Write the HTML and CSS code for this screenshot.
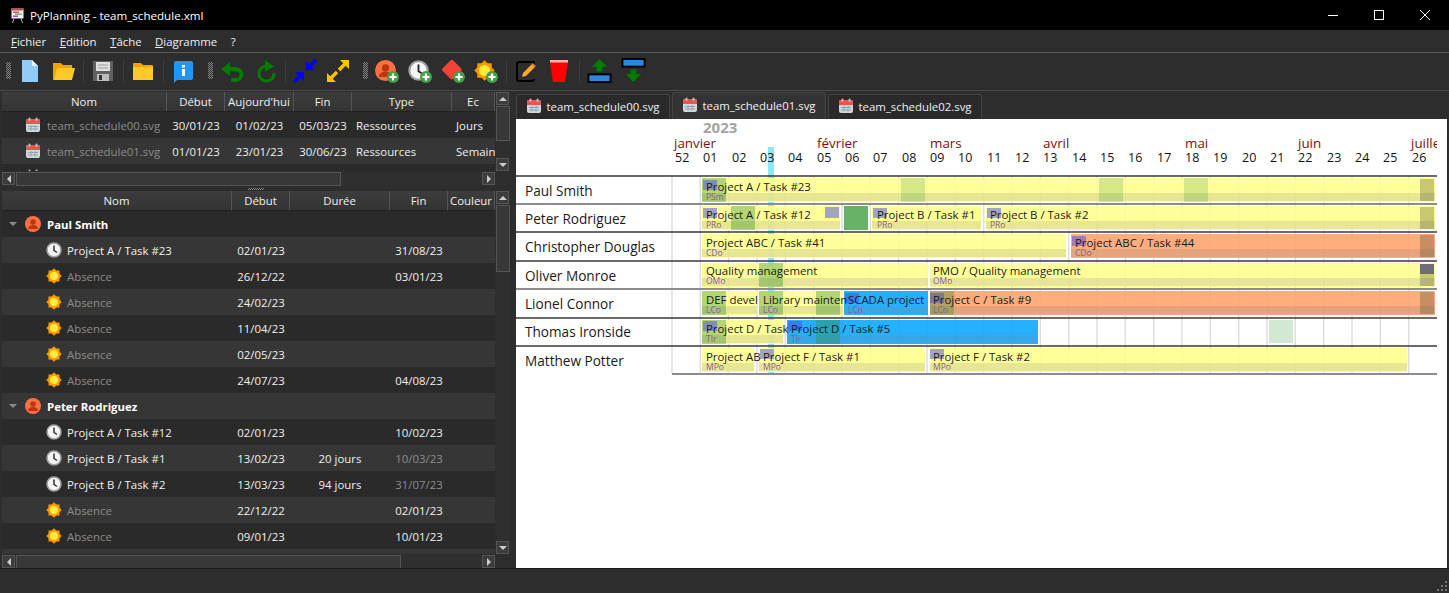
FILE: index.html
```html
<!DOCTYPE html>
<html lang="fr">
<head>
  <meta charset="UTF-8" />
  <title>PyPlanning - team_schedule.xml</title>
  <meta name="viewport" content="width=device-width, initial-scale=1.0" />
  <link rel="stylesheet" href="styles.css">
</head>
<body>

<!-- shared icons -->
<svg class="defs" width="0" height="0">
  <symbol id="i-cal" viewBox="0 0 16 16">
    <rect x="1" y="2" width="14" height="13" rx="2" fill="#cfd8dc"/>
    <path d="M1 7V4a2 2 0 0 1 2-2h10a2 2 0 0 1 2 2v3z" fill="#ef5350"/>
    <rect x="3.5" y="0.5" width="2" height="3.5" rx="1" fill="#b0bec5"/>
    <rect x="10.5" y="0.5" width="2" height="3.5" rx="1" fill="#b0bec5"/>
    <path d="M3 9.5h10M3 12h10M6 8v5.5M10 8v5.5" stroke="#90a4ae" stroke-width="1"/>
  </symbol>
  <symbol id="i-clock" viewBox="0 0 16 16">
    <circle cx="8" cy="8" r="7" fill="#f5f5f5" stroke="#9e9e9e" stroke-width="1.6"/>
    <path d="M8 3.5V8.5L11 10.5" fill="none" stroke="#222" stroke-width="1.4"/>
  </symbol>
  <symbol id="i-sun" viewBox="0 0 16 16">
    <rect x="2.5" y="2.5" width="11" height="11" fill="#ff9800"/>
    <rect x="2.5" y="2.5" width="11" height="11" fill="#ff9800" transform="rotate(45 8 8)"/>
    <circle cx="8" cy="8" r="4.2" fill="#ffeb3b"/>
  </symbol>
  <symbol id="i-person" viewBox="0 0 16 16">
    <circle cx="8" cy="8" r="8" fill="#ff7043"/>
    <circle cx="8" cy="6" r="2.8" fill="#bf360c"/>
    <path d="M3 13c0-3 2.500-4 5-4s5 1 5 4z" fill="#bf360c"/>
  </symbol>
  <symbol id="i-plus" viewBox="0 0 12 12">
    <circle cx="6" cy="6" r="6" fill="#43a047"/>
    <path d="M6 2.500v7M2.500 6h7" stroke="#fff" stroke-width="2.200"/>
  </symbol>
</svg>

<header class="titlebar">
  <svg class="app-icon" viewBox="0 0 13 15" width="13" height="15">
    <rect x="0.500" y="0.500" width="12" height="10" fill="#f5f5f5"/>
    <rect x="0.500" y="0.500" width="12" height="2" fill="#e53935"/>
    <rect x="2" y="3.500" width="6" height="1.500" fill="#ec407a"/>
    <rect x="4" y="5.500" width="7" height="1.500" fill="#66bb6a"/>
    <rect x="2" y="7.500" width="5" height="1.500" fill="#ab47bc"/>
    <path d="M3 10.500l-1.500 4.500M10 10.500l1.500 4.500" stroke="#bbb" stroke-width="1"/>
  </svg>
  <span class="app-title">PyPlanning - team_schedule.xml</span>
  <div class="winbtns">
    <svg width="10" height="10" viewBox="0 0 10 10"><path d="M0 5.500h10" stroke="#fff"/></svg>
    <svg width="10" height="10" viewBox="0 0 10 10"><rect x="0.500" y="0.500" width="9" height="9" fill="none" stroke="#fff"/></svg>
    <svg width="10" height="10" viewBox="0 0 10 10"><path d="M0 0l10 10M10 0L0 10" stroke="#fff"/></svg>
  </div>
</header>

<nav class="menubar">
  <span><u>F</u>ichier</span>
  <span><u>E</u>dition</span>
  <span><u>T</u>âche</span>
  <span><u>D</u>iagramme</span>
  <span>?</span>
</nav>

<div class="toolbar">
  <i class="grip"></i>
  <svg class="tool" viewBox="0 0 24 24"><path d="M4 1h10l6 6v16H4z" fill="#90caf9"/><path d="M14 1l6 6h-6z" fill="#e3f2fd"/></svg>
  <svg class="tool" viewBox="0 0 24 24"><path d="M2 4h8l2 2h9v15H2z" fill="#ffa000"/><path d="M6 9h18l-3 12H3z" fill="#ffca28"/></svg>
  <i class="sep"></i>
  <svg class="tool" viewBox="0 0 24 24"><path d="M2 2h20v20H2z" fill="#616161"/><rect x="5" y="3" width="14" height="9" fill="#e0e0e0"/><path d="M7 6h10M7 9h10" stroke="#9e9e9e"/><rect x="6" y="15" width="12" height="7" fill="#bdbdbd"/><rect x="8" y="16" width="3" height="5" fill="#333"/></svg>
  <i class="sep"></i>
  <svg class="tool" viewBox="0 0 24 24"><path d="M2 5a1 1 0 0 1 1-1h7l2 2h9a1 1 0 0 1 1 1v14H2z" fill="#ffa000"/><path d="M2 8h20v12a1 1 0 0 1-1 1H3a1 1 0 0 1-1-1z" fill="#ffca28"/></svg>
  <i class="sep"></i>
  <svg class="tool" viewBox="0 0 24 24"><path d="M5 2h15a2 2 0 0 1 2 2v15a2 2 0 0 1-2 2H6l-3 3V4a2 2 0 0 1 2-2z" fill="#2196f3"/><rect x="11" y="10" width="3" height="7" fill="#fff"/><rect x="11" y="6" width="3" height="2.500" fill="#fff"/></svg>
  <i class="grip"></i>
  <svg class="tool" viewBox="0 0 24 24"><path d="M8 10h8a5.500 5.500 0 0 1 0 11h-5" fill="none" stroke="#007d00" stroke-width="3.800"/><path d="M1 10l9-7v14z" fill="#007d00"/></svg>
  <svg class="tool" viewBox="0 0 24 24"><path d="M16 7.500a7.500 7.500 0 1 0 5 6.500" fill="none" stroke="#007d00" stroke-width="3"/><path d="M12 1l9 6.500-9 5z" fill="#007d00"/></svg>
  <i class="sep"></i>
  <svg class="tool" viewBox="0 0 24 24"><path d="M13 11V2l9 9zM11 13v9l-9-9z" fill="#0000ff"/><path d="M23 1l-6 6M1 23l6-6" stroke="#0000ff" stroke-width="3.400"/></svg>
  <svg class="tool" viewBox="0 0 24 24"><path d="M23 1v9l-9-9zM1 23v-9l9 9z" fill="#ffc107"/><path d="M19 5l-6 6M5 19l6-6" stroke="#ffc107" stroke-width="3.400"/></svg>
  <i class="grip"></i>
  <svg class="tool" viewBox="0 0 24 24"><use href="#i-person" x="0" y="1" width="21" height="21"/><use href="#i-plus" x="12" y="12" width="12" height="12"/></svg>
  <svg class="tool" viewBox="0 0 24 24"><use href="#i-clock" x="0" y="1" width="21" height="21"/><use href="#i-plus" x="12" y="12" width="12" height="12"/></svg>
  <svg class="tool" viewBox="0 0 24 24"><rect x="3" y="3" width="15" height="15" rx="2" fill="#f44336" transform="rotate(45 10.500 11)"/><use href="#i-plus" x="12" y="12" width="12" height="12"/></svg>
  <svg class="tool" viewBox="0 0 24 24"><use href="#i-sun" x="0" y="1" width="21" height="21"/><use href="#i-plus" x="12" y="12" width="12" height="12"/></svg>
  <i class="sep"></i>
  <svg class="tool" viewBox="0 0 24 24"><path d="M20 8V5a2 2 0 0 0-2-2H5a2 2 0 0 0-2 2v15a2 2 0 0 0 2 2h13a2 2 0 0 0 2-2" fill="none" stroke="#000" stroke-width="2"/><path d="M8 18l1-4 9-9 3 3-9 9z" fill="#ffa726"/><path d="M18 5l1-1 3 3-1 1z" fill="#e57373"/></svg>
  <svg class="tool" viewBox="0 0 24 24"><path d="M3 3h18l-3 20H6z" fill="#ff0000"/><rect x="3" y="1" width="18" height="2.500" fill="#ffb3b3"/></svg>
  <i class="sep"></i>
  <svg class="tool wide" viewBox="0 0 26 26"><path d="M13 1l8 8h-5v5h-6V9H5z" fill="#007d00"/><rect x="1.500" y="17" width="23" height="8" fill="#2e86de" stroke="#000" stroke-width="2"/></svg>
  <svg class="tool wide" viewBox="0 0 26 26"><rect x="1.500" y="1" width="23" height="8" fill="#2e86de" stroke="#000" stroke-width="2"/><path d="M13 25l-8-8h5v-5h6v5h5z" fill="#007d00"/></svg>
</div>

<main class="workspace">
  <section class="leftpane">

    <div class="block block-files">
      <div class="table">
        <div class="thead files-cols">
          <span>Nom</span><span>Début</span><span>Aujourd'hui</span><span>Fin</span><span>Type</span><span>Ec</span>
        </div>
        <div class="tbody">
          <div class="row files-cols">
            <span class="cell-name muted"><svg class="ico"><use href="#i-cal"/></svg>team_schedule00.svg</span><span>30/01/23</span><span>01/02/23</span><span>05/03/23</span><span class="left">Ressources</span><span class="left">Jours</span>
          </div>
          <div class="row files-cols">
            <span class="cell-name muted"><svg class="ico"><use href="#i-cal"/></svg>team_schedule01.svg</span><span>01/01/23</span><span>23/01/23</span><span>30/06/23</span><span class="left">Ressources</span><span class="left">Semaine</span>
          </div>
          <div class="row files-cols">
            <span class="cell-name muted"><svg class="ico"><use href="#i-cal"/></svg>team_schedule02.svg</span>
          </div>
        </div>
      </div>
      <div class="vbar">
        <b class="sbtn"><i class="tri up"></i></b><b class="thumb thumb-v1"></b><b class="track"></b><b class="sbtn"><i class="tri down"></i></b>
      </div>
      <div class="hbar">
        <b class="sbtn"><i class="tri lf"></i></b><b class="thumb thumb-h1"></b><b class="track"></b><b class="sbtn"><i class="tri rt"></i></b>
      </div>
    </div>

    <div class="splitter"><i></i></div>

    <div class="block block-tasks">
      <div class="table">
        <div class="thead tasks-cols">
          <span>Nom</span><span>Début</span><span>Durée</span><span>Fin</span><span>Couleur</span>
        </div>
        <div class="tbody">
          <div class="row tasks-cols"><span class="cell-group"><i class="tri down"></i><svg class="ico"><use href="#i-person"/></svg>Paul Smith</span></div>
          <div class="row tasks-cols"><span class="cell-child"><svg class="ico"><use href="#i-clock"/></svg>Project A / Task #23</span><span>02/01/23</span><span></span><span>31/08/23</span></div>
          <div class="row tasks-cols"><span class="cell-child muted"><svg class="ico"><use href="#i-sun"/></svg>Absence</span><span>26/12/22</span><span></span><span>03/01/23</span></div>
          <div class="row tasks-cols"><span class="cell-child muted"><svg class="ico"><use href="#i-sun"/></svg>Absence</span><span>24/02/23</span></div>
          <div class="row tasks-cols"><span class="cell-child muted"><svg class="ico"><use href="#i-sun"/></svg>Absence</span><span>11/04/23</span></div>
          <div class="row tasks-cols"><span class="cell-child muted"><svg class="ico"><use href="#i-sun"/></svg>Absence</span><span>02/05/23</span></div>
          <div class="row tasks-cols"><span class="cell-child muted"><svg class="ico"><use href="#i-sun"/></svg>Absence</span><span>24/07/23</span><span></span><span>04/08/23</span></div>
          <div class="row tasks-cols"><span class="cell-group"><i class="tri down"></i><svg class="ico"><use href="#i-person"/></svg>Peter Rodriguez</span></div>
          <div class="row tasks-cols"><span class="cell-child"><svg class="ico"><use href="#i-clock"/></svg>Project A / Task #12</span><span>02/01/23</span><span></span><span>10/02/23</span></div>
          <div class="row tasks-cols"><span class="cell-child"><svg class="ico"><use href="#i-clock"/></svg>Project B / Task #1</span><span>13/02/23</span><span>20 jours</span><span class="muted">10/03/23</span></div>
          <div class="row tasks-cols"><span class="cell-child"><svg class="ico"><use href="#i-clock"/></svg>Project B / Task #2</span><span>13/03/23</span><span>94 jours</span><span class="muted">31/07/23</span></div>
          <div class="row tasks-cols"><span class="cell-child muted"><svg class="ico"><use href="#i-sun"/></svg>Absence</span><span>22/12/22</span><span></span><span>02/01/23</span></div>
          <div class="row tasks-cols"><span class="cell-child muted"><svg class="ico"><use href="#i-sun"/></svg>Absence</span><span>09/01/23</span><span></span><span>10/01/23</span></div>
          <div class="row tasks-cols"><span class="cell-child muted"><svg class="ico"><use href="#i-sun"/></svg>Absence</span></div>
        </div>
      </div>
      <div class="vbar">
        <b class="sbtn"><i class="tri up"></i></b><b class="thumb thumb-v2"></b><b class="track"></b><b class="sbtn"><i class="tri down"></i></b>
      </div>
      <div class="hbar">
        <b class="sbtn"><i class="tri lf"></i></b><b class="thumb thumb-h2"></b><b class="track"></b><b class="sbtn"><i class="tri rt"></i></b>
      </div>
    </div>
  </section>

  <section class="rightpane">
    <div class="tabs">
      <div class="tab"><svg class="ico"><use href="#i-cal"/></svg>team_schedule00.svg</div>
      <div class="tab active"><svg class="ico"><use href="#i-cal"/></svg>team_schedule01.svg</div>
      <div class="tab"><svg class="ico"><use href="#i-cal"/></svg>team_schedule02.svg</div>
    </div>
    <div class="canvas">
      <svg class="gantt" viewBox="516 119 931 449" width="931" height="449">
        <defs><clipPath id="chart-clip"><rect x="516" y="119" width="921" height="449"/></clipPath></defs>
        <g clip-path="url(#chart-clip)">
          <text class="year" x="703" y="133">2023</text>
          <g class="months">
            <text x="674" y="148">janvier</text><text x="817" y="148">février</text><text x="930" y="148">mars</text><text x="1043" y="148">avril</text><text x="1185" y="148">mai</text><text x="1298" y="148">juin</text><text x="1411" y="148">juillet</text>
          </g>
          <rect class="today" x="768" y="147" width="6" height="227"/>
          <g class="weeks">
            <text x="675" y="162">52</text><text x="703" y="162">01</text><text x="732" y="162">02</text><text x="760" y="162">03</text><text x="788" y="162">04</text><text x="817" y="162">05</text><text x="845" y="162">06</text><text x="873" y="162">07</text><text x="902" y="162">08</text><text x="930" y="162">09</text><text x="958" y="162">10</text><text x="987" y="162">11</text><text x="1015" y="162">12</text><text x="1043" y="162">13</text><text x="1072" y="162">14</text><text x="1100" y="162">15</text><text x="1128" y="162">16</text><text x="1157" y="162">17</text><text x="1185" y="162">18</text><text x="1213" y="162">19</text><text x="1242" y="162">20</text><text x="1270" y="162">21</text><text x="1298" y="162">22</text><text x="1327" y="162">23</text><text x="1355" y="162">24</text><text x="1383" y="162">25</text><text x="1412" y="162">26</text>
          </g>
          <path class="grid" d="M672 176V374M700.300 176V374M728.700 176V374M757 176V374M785.300 176V374M813.700 176V374M842 176V374M870.300 176V374M898.700 176V374M927 176V374M955.300 176V374M983.700 176V374M1012 176V374M1040.300 176V374M1068.700 176V374M1097 176V374M1125.300 176V374M1153.700 176V374M1182 176V374M1210.300 176V374M1238.700 176V374M1267 176V374M1295.300 176V374M1323.700 176V374M1352 176V374M1380.300 176V374M1408.700 176V374"/>

          <!-- Paul Smith -->
          <g transform="translate(0 176)">
            <text class="name" x="525" y="20">Paul Smith</text>
            <rect class="bar yellow" x="702" y="2" width="733" height="24"/><rect class="strip" x="702" y="17" width="733" height="8"/>
            <rect class="off" x="702" y="2" width="24" height="24"/><rect class="off soft" x="901" y="2" width="24" height="24"/><rect class="off soft" x="1099" y="2" width="24" height="24"/><rect class="off soft" x="1184" y="2" width="24" height="24"/>
            <rect class="end" x="1420" y="3" width="14" height="22"/>
            <rect class="mark" x="703" y="4" width="14" height="10"/>
            <text class="label" x="706" y="14.500">Project A / Task #23</text><text class="who" x="706" y="23.500">PSm</text>
          </g>
          <!-- Peter Rodriguez -->
          <g transform="translate(0 204)">
            <text class="name" x="525" y="20">Peter Rodriguez</text>
            <rect class="bar yellow" x="702" y="2" width="138" height="24"/><rect class="strip" x="702" y="17" width="138" height="8"/>
            <rect class="off" x="731" y="2" width="24" height="24"/>
            <rect class="mark" x="703" y="4" width="14" height="10"/><rect class="mark" x="825" y="3" width="14" height="11"/>
            <rect class="block-green" x="844" y="2" width="24" height="24"/>
            <rect class="bar yellow" x="872" y="2" width="109" height="24"/><rect class="strip" x="872" y="17" width="109" height="8"/><rect class="mark" x="873" y="4" width="14" height="10"/>
            <rect class="bar yellow" x="986" y="2" width="449" height="24"/><rect class="strip" x="986" y="17" width="449" height="8"/><rect class="mark" x="987" y="4" width="14" height="10"/>
            <rect class="end" x="1420" y="3" width="14" height="22"/>
            <text class="label" x="706" y="14.500">Project A / Task #12</text><text class="who" x="706" y="23.500">PRo</text>
            <text class="label" x="877" y="14.500">Project B / Task #1</text><text class="who" x="877" y="23.500">PRo</text>
            <text class="label" x="990" y="14.500">Project B / Task #2</text><text class="who" x="990" y="23.500">PRo</text>
          </g>
          <!-- Christopher Douglas -->
          <g transform="translate(0 232)">
            <text class="name" x="525" y="20">Christopher Douglas</text>
            <rect class="bar yellow" x="702" y="2" width="364" height="24"/><rect class="strip" x="702" y="17" width="364" height="8"/>
            <rect class="bar orange" x="1071" y="2" width="364" height="24"/><rect class="strip" x="1071" y="17" width="364" height="8"/>
            <rect class="mark" x="1072" y="4" width="14" height="10"/>
            <rect class="end" x="1420" y="3" width="14" height="22"/>
            <text class="label" x="706" y="15">Project ABC / Task #41</text><text class="who" x="706" y="23.500">CDo</text>
            <text class="label" x="1075" y="15">Project ABC / Task #44</text><text class="who" x="1075" y="23.500">CDo</text>
          </g>
          <!-- Oliver Monroe -->
          <g transform="translate(0 261)">
            <text class="name" x="525" y="20">Oliver Monroe</text>
            <rect class="bar yellow" x="702" y="2" width="226" height="24"/><rect class="strip" x="702" y="17" width="226" height="8"/>
            <rect class="bar yellow" x="930" y="2" width="505" height="24"/><rect class="strip" x="930" y="17" width="505" height="8"/>
            <rect class="off" x="759" y="2" width="24" height="24"/>
            <rect class="end" x="1420" y="3" width="14" height="22"/><rect class="mark dark" x="1420" y="3" width="14" height="10"/>
            <text class="label" x="706" y="14">Quality management</text><text class="who" x="706" y="23">OMo</text>
            <text class="label" x="933" y="14">PMO / Quality management</text><text class="who" x="933" y="23">OMo</text>
          </g>
          <!-- Lionel Connor -->
          <g transform="translate(0 289)">
            <text class="name" x="525" y="20">Lionel Connor</text>
            <rect class="bar yellow" x="702" y="2" width="55" height="24"/><rect class="strip" x="702" y="17" width="55" height="8"/>
            <rect class="bar yellow" x="759" y="2" width="84" height="24"/><rect class="strip" x="759" y="17" width="84" height="8"/>
            <rect class="bar blue" x="844" y="2" width="84" height="24"/><rect class="strip" x="844" y="17" width="84" height="8"/>
            <rect class="bar orange" x="930" y="2" width="505" height="24"/><rect class="strip" x="930" y="17" width="505" height="8"/>
            <rect class="off" x="702" y="2" width="24" height="24"/><rect class="off" x="759" y="2" width="24" height="24"/><rect class="off" x="816" y="2" width="24" height="24"/><rect class="off" x="930" y="2" width="24" height="24"/>
            <rect class="mark" x="845" y="4" width="14" height="10"/><rect class="mark" x="930" y="4" width="14" height="10"/>
            <rect class="end" x="1420" y="3" width="14" height="22"/>
            <text class="label" x="706" y="15">DEF devel</text><text class="who" x="706" y="23.500">LCo</text>
            <text class="label" x="763" y="15">Library mainten</text><text class="who" x="763" y="23.500">LCo</text>
            <text class="label" x="848" y="15">SCADA project</text><text class="who" x="848" y="23.500">LCo</text>
            <text class="label" x="933" y="15">Project C / Task #9</text><text class="who" x="933" y="23.500">LCo</text>
          </g>
          <!-- Thomas Ironside -->
          <g transform="translate(0 318)">
            <text class="name" x="525" y="19">Thomas Ironside</text>
            <rect class="bar yellow" x="702" y="2" width="81" height="24"/><rect class="strip" x="702" y="17" width="81" height="8"/>
            <rect class="off" x="702" y="2" width="24" height="24"/>
            <rect class="bar blue" x="787" y="2" width="251" height="24"/><rect class="strip" x="787" y="17" width="251" height="8"/>
            <rect class="off" x="816" y="2" width="24" height="24"/>
            <rect class="mark" x="703" y="3" width="14" height="10"/><rect class="mark" x="788" y="3" width="14" height="10"/>
            <rect class="pale" x="1269" y="2" width="24" height="23"/>
            <text class="label" x="706" y="14.500">Project D / Task</text><text class="who" x="706" y="23.500">TIr</text>
            <text class="label" x="791" y="14.500">Project D / Task #5</text><text class="who" x="791" y="23.500">TIr</text>
          </g>
          <!-- Matthew Potter -->
          <g transform="translate(0 346)">
            <text class="name" x="525" y="20">Matthew Potter</text>
            <rect class="bar yellow" x="702" y="2" width="52" height="24"/><rect class="strip" x="702" y="17" width="52" height="8"/>
            <rect class="bar yellow" x="759" y="2" width="166" height="24"/><rect class="strip" x="759" y="17" width="166" height="8"/>
            <rect class="bar yellow" x="930" y="2" width="477" height="24"/><rect class="strip" x="930" y="17" width="477" height="8"/>
            <rect class="mark" x="760" y="3" width="14" height="10"/><rect class="mark" x="930" y="3" width="14" height="10"/>
            <text class="label" x="706" y="14.500">Project AB</text><text class="who" x="706" y="23.500">MPo</text>
            <text class="label" x="763" y="14.500">Project F / Task #1</text><text class="who" x="763" y="23.500">MPo</text>
            <text class="label" x="933" y="14.500">Project F / Task #2</text><text class="who" x="933" y="23.500">MPo</text>
          </g>

          <path class="rule" d="M516 176H1437M516 232H1437M516 261H1437M516 318H1437M516 346H1437"/>
          <path class="rule light" d="M516 204H1437M516 289H1437M672 374H1437"/>
        </g>
      </svg>
    </div>
  </section>
</main>

<footer class="statusbar"><i class="sizegrip"></i></footer>

</body>
</html>
```

FILE: styles.css
```css
html, body { height: 100%; }
body {
  margin: 0; height: 593px; overflow: hidden;
  display: flex; flex-direction: column;
  background: #2d2d2d; color: #f0f0f0;
  font-family: "Open Sans", "Noto Sans", sans-serif; font-size: 11.4px;
}
.defs { position: absolute; }
u { text-decoration: underline; }

/* title + menu */
.titlebar {
  height: 30px; flex: none; background: #000; color: #fff;
  display: flex; align-items: center; padding-left: 11px;
}
.app-icon { margin-right: 6px; }
.app-title { font-size: 11.6px; }
.winbtns { margin-left: auto; display: flex; gap: 36px; padding-right: 19px; }
.menubar {
  height: 22px; flex: none; display: flex; align-items: center;
  gap: 13.5px; padding-left: 11px; font-size: 11.4px;
  border-bottom: 1px solid #5a5a5a;
}

.toolbar {
  height: 37px; flex: none; display: flex; align-items: center;
  padding: 0 0 2px 6px; gap: 9px; box-sizing: border-box;
}
.tool { width: 24px; height: 24px; flex: none; }
.tool.wide { width: 25px; height: 25px; }
.grip {
  width: 5px; height: 17px; flex: none; margin-right: -2px;
  background-image: repeating-conic-gradient(#858585 0 25%, #2d2d2d 0 50%);
  background-size: 2px 2px;
}
.tool + .grip { margin-left: 4px; }
.sep { width: 1px; height: 24px; background: #3b3b3b; flex: none; margin: 0 -1.5px; }

/* panes */
.workspace { flex: 1; display: flex; min-height: 0; border-top: 1px solid #4a4a4a; }
.leftpane {
  width: 508px; margin-left: 2px; flex: none;
  display: flex; flex-direction: column;
}
.block {
  display: grid; grid-template-columns: 493px 1fr; grid-template-rows: 1fr 14px;
  gap: 1px 1px;
}
.block-files { height: 94px; flex: none; margin-top: 1px; }
.block-tasks { height: 378px; flex: none; }
.table { overflow: hidden; display: flex; flex-direction: column; min-height: 0; }
.thead {
  height: 19px; flex: none; background: linear-gradient(#3c3c3c, #343434);
  border-bottom: 1px solid #222; align-items: center; text-align: center;
}
.thead span {
  border-right: 1px solid #555; height: 100%; line-height: 19px;
  white-space: nowrap; overflow: hidden;
}
.files-cols { display: grid; grid-template-columns: 165px 58px 69px 58px 100px 43px; }
.tasks-cols { display: grid; grid-template-columns: 230px 58px 100px 58px 47px; }
.tbody { flex: 1; overflow: hidden; }
.row { height: 26px; align-items: center; text-align: center; background: #2a2a2a; }
.row:nth-child(even) { background: #363636; }
.row span { white-space: nowrap; overflow: hidden; }
.row .left { text-align: left; padding-left: 4px; }
.muted { color: #8c8c8c; }
.ico { width: 16px; height: 16px; flex: none; }
.cell-name, .cell-group, .cell-child { display: flex; align-items: center; text-align: left; }
.cell-name { padding-left: 23px; gap: 6px; }
.cell-group { padding-left: 7px; font-weight: 700; color: #fff; }
.cell-group .ico { margin: 0 6px 0 8px; }
.cell-child { padding-left: 44px; gap: 5px; }

/* scrollbars */
.vbar, .hbar { display: flex; background: #2f2f2f; gap: 1px; }
.vbar { flex-direction: column; }
.sbtn {
  flex: none; width: 13px; height: 13px; background: #3c3c3c;
  border: 1px solid #555; box-sizing: border-box;
  display: flex; align-items: center; justify-content: center;
}
.thumb { flex: none; background: #383838; border: 1px solid #555; box-sizing: border-box; }
.track { flex: 1; }
.thumb-v1 { height: 35px; }
.thumb-v2 { height: 67px; }
.thumb-h1 { width: 325px; }
.thumb-h2 { width: 385px; }
.tri { width: 0; height: 0; border: 4px solid transparent; }
.tri.up { border-bottom-color: #ccc; border-top-width: 0; }
.tri.down { border-top-color: #ccc; border-bottom-width: 0; }
.tri.lf { border-right-color: #ccc; border-left-width: 0; }
.tri.rt { border-left-color: #ccc; border-right-width: 0; }
.cell-group .tri.down { border-top-color: #8a8a8a; }

.splitter { height: 5px; flex: none; display: flex; align-items: center; justify-content: center; }
.splitter i {
  width: 16px; height: 2px;
  background-image: repeating-conic-gradient(#858585 0 25%, #2d2d2d 0 50%);
  background-size: 2px 2px;
}

/* right side */
.rightpane { flex: 1; display: flex; flex-direction: column; margin-left: 6px; margin-right: 2px; min-width: 0; }
.tabs { height: 28px; flex: none; display: flex; align-items: flex-end; gap: 2px; }
.tab {
  width: 154px; height: 25px; box-sizing: border-box; flex: none; padding-bottom: 2px;
  display: flex; align-items: center; justify-content: center; gap: 4px;
  background: #2a2a2a; border: 1px solid #444; border-bottom: 0;
  border-radius: 3px 3px 0 0;
}
.tab.active { height: 27px; background: #333; }
.canvas { flex: 1; background: #fff; min-height: 0; overflow: hidden; }
.gantt { display: block; }

/* chart */
.gantt text { font-family: "Open Sans", "Noto Sans", sans-serif; }
.year { font-size: 15px; font-weight: 700; fill: #a3a3a3; }
.months text { font-size: 13.4px; fill: #7a0f0f; }
.weeks text { font-size: 12.5px; fill: #111; }
.name { font-size: 13.6px; fill: #1a1a1a; }
.label { font-size: 11.4px; fill: #1a1a1a; }
.who { font-size: 8.5px; fill: #8e5a9a; }
.today { fill: #8fe6fb; }
.grid { stroke: #dedede; stroke-width: 1.5; fill: none; }
.rule { stroke: #3a3a3a; stroke-width: 1.4; fill: none; }
.rule.light { stroke: #8c8c8c; stroke-width: 2; }
.bar { opacity: 0.9; }
.yellow { fill: #ffff8f; }
.orange { fill: #ffa46f; }
.blue { fill: #0da8ff; }
.strip { fill: #808080; opacity: 0.2; }
.off { fill: #2e8b2e; opacity: 0.36; }
.off.soft { opacity: 0.2; }
.end { fill: #48481a; opacity: 0.3; }
.mark { fill: #4a4ae6; opacity: 0.5; }
.mark.dark { fill: #505070; opacity: 0.75; }
.block-green { fill: #66b266; }
.pale { fill: #d3e8d3; }

.statusbar { height: 25px; flex: none; position: relative; border-top: 1px solid #1a1a1a; box-sizing: border-box; }
.sizegrip {
  position: absolute; right: 2px; bottom: 2px; width: 12px; height: 12px;
  background-image: conic-gradient(from 90deg, #777 25%, transparent 0);
  background-size: 4px 4px;
  clip-path: polygon(100% 0, 100% 100%, 0 100%);
}
```
